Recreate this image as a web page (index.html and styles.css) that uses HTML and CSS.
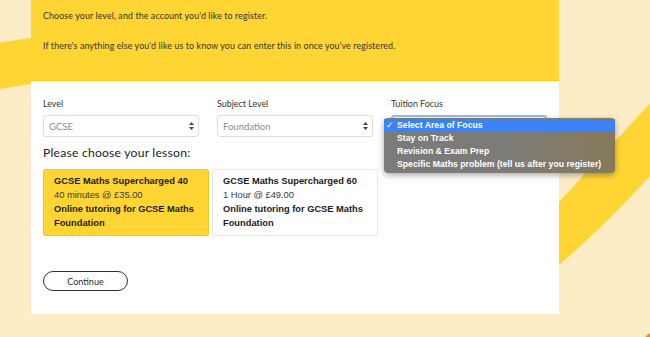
FILE: index.html
```html
<!DOCTYPE html>
<html lang="en">
<head>
<meta charset="utf-8">
<title>Choose your lesson</title>
<link rel="stylesheet" href="styles.css">
</head>
<body>
<svg class="backdrop" width="650" height="337" viewBox="0 0 650 337" aria-hidden="true">
  <path class="swoosh" d="M -10 44 Q 15 40 45 36 L 45 82 Q 15 86 -10 91 Z"/>
  <path class="swoosh" d="M 700 49 L 500 266 L 500 312 Q 600 240 700 118 Z"/>
  <circle class="chat" cx="668" cy="357" r="30"/>
</svg>

<main class="card">
  <header class="card-head">
    <p>Choose your level, and the account you'd like to register.</p>
    <p class="second">If there's anything else you'd like us to know you can enter this in once you've registered.</p>
  </header>

  <section class="card-body">
    <div class="fields">
      <div class="field">
        <div class="label">Level</div>
        <div class="select"><span>GCSE</span>
          <svg class="arrows" width="5" height="8" viewBox="0 0 5 8"><path d="M2.5 0 L5 3 L0 3 Z M0 5 L5 5 L2.5 8 Z"/></svg>
        </div>
      </div>
      <div class="field">
        <div class="label">Subject Level</div>
        <div class="select"><span>Foundation</span>
          <svg class="arrows" width="5" height="8" viewBox="0 0 5 8"><path d="M2.5 0 L5 3 L0 3 Z M0 5 L5 5 L2.5 8 Z"/></svg>
        </div>
      </div>
      <div class="field focus-field">
        <div class="label">Tuition Focus</div>
        <div class="select focused"></div>
        <ul class="menu">
          <li class="active"><span class="check">✓</span>Select Area of Focus</li>
          <li>Stay on Track</li>
          <li>Revision &amp; Exam Prep</li>
          <li>Specific Maths problem (tell us after you register)</li>
        </ul>
      </div>
    </div>

    <h2 class="lesson-title">Please choose your lesson:</h2>

    <div class="lessons">
      <div class="lesson selected">
        <div class="l-name">GCSE Maths Supercharged 40</div>
        <div class="l-price">40 minutes @ £35.00</div>
        <div class="l-desc">Online tutoring for GCSE Maths Foundation</div>
      </div>
      <div class="lesson">
        <div class="l-name">GCSE Maths Supercharged 60</div>
        <div class="l-price">1 Hour @ £49.00</div>
        <div class="l-desc">Online tutoring for GCSE Maths Foundation</div>
      </div>
    </div>

    <button class="continue">Continue</button>
  </section>
</main>
</body>
</html>
```

FILE: styles.css
```css
html, body {
  margin: 0;
  padding: 0;
}
body {
  width: 650px;
  height: 337px;
  overflow: hidden;
  position: relative;
  background: #fdedc7;
  font-family: Lato, "Open Sans", sans-serif;
  color: #2b2b2b;
}
.backdrop {
  position: absolute;
  left: 0;
  top: 0;
  z-index: 0;
}
.swoosh { fill: #ffd534; }
.chat { fill: #f5821f; }

.card {
  position: relative;
  z-index: 1;
  margin-left: 31px;
  width: 528px;
  background: #fff;
}
.card-head {
  background: #ffd534;
  height: 70px;
  padding: 10px 12px 0;
  border-bottom: 1px solid #f7cc1c;
}
.card-head p {
  margin: 0;
  font-size: 8.9px;
  line-height: 12px;
  color: #3a3420;
  letter-spacing: 0.1px;
}
.card-head p.second { margin-top: 18px; }

.card-body {
  padding: 17px 12px 23px;
}
.fields {
  display: flex;
  gap: 18px;
}
.field {
  width: 156px;
}
.focus-field { position: relative; }
.label {
  font-size: 8.9px;
  line-height: 12px;
  color: #333;
  margin-bottom: 5px;
}
.select {
  box-sizing: border-box;
  height: 22px;
  border: 1px solid #dedede;
  border-radius: 3px;
  display: flex;
  align-items: center;
  justify-content: space-between;
  padding: 0 4px 0 5px;
  font-size: 9.5px;
  color: #8a8a8a;
}
.select.focused {
  border: 2px solid #9cc1f4;
}
.arrows { fill: #444; }

.menu {
  position: absolute;
  left: -7px;
  top: 20px;
  width: 231px;
  box-sizing: border-box;
  margin: 0;
  padding: 1px 0 2px;
  list-style: none;
  border-radius: 4px;
  background: linear-gradient(90deg, #7b7b7a 0%, #7d7b76 55%, #867a58 100%);
  box-shadow: 0 2px 6px rgba(0,0,0,0.35);
  font-family: "Liberation Sans", Arial, sans-serif;
  font-weight: bold;
  font-size: 8.7px;
  color: #fff;
}
.menu li {
  height: 13px;
  line-height: 13px;
  padding-left: 13px;
  position: relative;
  white-space: nowrap;
}
.menu li.active { background: #3a82f6; }
.menu .check {
  position: absolute;
  left: 2px;
  top: 0;
  font-weight: normal;
}

.lesson-title {
  margin: 8px 0 0;
  font-size: 12.2px;
  line-height: 16px;
  font-weight: normal;
  color: #222;
  letter-spacing: 0.2px;
}
.lessons {
  display: flex;
  gap: 3px;
  margin-top: 8px;
}
.lesson {
  box-sizing: border-box;
  width: 166px;
  height: 67px;
  padding: 4px 10px 5px;
  border: 1px solid #e6e6e6;
  border-radius: 2px;
  background: #fff;
  font-family: "Liberation Sans", Arial, sans-serif;
  font-size: 9.3px;
  line-height: 14px;
  color: #1b1b1b;
}
.lesson.selected {
  background: #ffd534;
  border-color: #f3c91f;
}
.l-name, .l-desc { font-weight: bold; }
.l-price { color: #3a3a3a; }

.continue {
  display: block;
  margin-top: 35px;
  width: 85px;
  height: 20px;
  border: 1px solid #2e2e2e;
  border-radius: 10px;
  background: #fff;
  font-family: Lato, "Open Sans", sans-serif;
  font-size: 9px;
  color: #2b2b2b;
  padding: 0;
}
```
